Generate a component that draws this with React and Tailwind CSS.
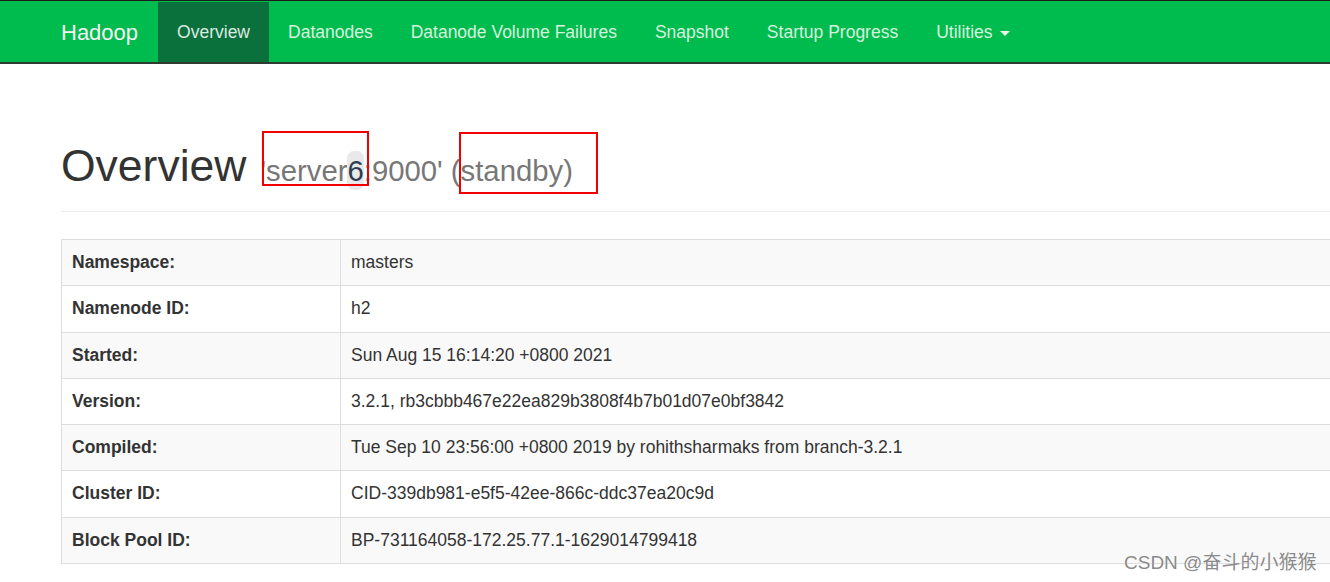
import React from "react";

const rows = [
  ["Namespace:", "masters"],
  ["Namenode ID:", "h2"],
  ["Started:", "Sun Aug 15 16:14:20 +0800 2021"],
  ["Version:", "3.2.1, rb3cbbb467e22ea829b3808f4b7b01d07e0bf3842"],
  ["Compiled:", "Tue Sep 10 23:56:00 +0800 2019 by rohithsharmaks from branch-3.2.1"],
  ["Cluster ID:", "CID-339db981-e5f5-42ee-866c-ddc37ea20c9d"],
  ["Block Pool ID:", "BP-731164058-172.25.77.1-1629014799418"],
];

const navItems = ["Datanodes", "Datanode Volume Failures", "Snapshot", "Startup Progress"];

export default function App() {
  return (
    <div
      className="relative w-[1330px] h-[582px] overflow-hidden bg-white text-[#333]"
      style={{ fontFamily: '"Liberation Sans", Arial, sans-serif' }}
    >
      {/* Navbar */}
      <div className="border-t border-[#1b1b1b] border-b-2 border-b-[#2f3a33] bg-[#00bc4e]">
        <div className="flex h-[61px] items-stretch pl-[61px] pt-[1px] text-[17.5px]">
          <div className="flex items-center pr-[20px] text-[22px] text-[#f2f2f2]">Hadoop</div>
          <div className="flex items-center bg-[#0a703c] px-[19px] text-[#dde9e1]">Overview</div>
          {navItems.map((n) => (
            <div key={n} className="flex items-center px-[19px] text-[#d7f3de]">
              {n}
            </div>
          ))}
          <div className="flex items-center px-[19px] text-[#d7f3de]">
            Utilities
            <span className="ml-[7px] mt-[2px] h-0 w-0 border-x-[5px] border-t-[5px] border-x-transparent border-t-[#e6f7ea]" />
          </div>
        </div>
      </div>

      {/* Page header */}
      <div className="pl-[61px]">
        <div className="mt-[77px] border-b border-[#eeeeee] pb-[16px]">
          <h1 className="text-[44.5px] leading-[49px] text-[#333]">
            Overview<span className="inline-block w-[14px]" />
            <span className="text-[29.3px] text-[#777]">
              'server<span className="rounded-[7px] bg-[#e9e9e9] py-[3px] text-[#2c3e50]">6</span>:9000' (standby)
            </span>
          </h1>
        </div>

        {/* Table */}
        <table className="mt-[27px] w-[1300px] border-collapse border border-[#dddddd] text-[17.5px] leading-[25.3px]">
          <tbody>
            {rows.map(([k, v], i) => (
              <tr key={k} className={i % 2 === 0 ? "bg-[#f9f9f9]" : "bg-white"}>
                <th className="w-[279px] border border-[#dddddd] px-[10px] py-[10px] text-left font-bold text-[#333]">
                  {k}
                </th>
                <td className="border border-[#dddddd] px-[10px] py-[10px] text-[#333]">{v}</td>
              </tr>
            ))}
          </tbody>
        </table>
      </div>

      {/* annotation boxes */}
      <div className="absolute left-[262px] top-[131px] h-[55px] w-[107px] border-2 border-[#f20000]" />
      <div className="absolute left-[459px] top-[132px] h-[62px] w-[139px] border-2 border-[#f20000]" />

      {/* watermark */}
      <div
        className="absolute left-[1124px] top-[551px] text-[19px] leading-[24px] text-[#8a8a8a]"
        style={{
          fontFamily: '"Liberation Sans", "Noto Sans CJK SC", sans-serif',
          textShadow: "0 0 1px #fff, 0 0 1px #fff",
        }}
      >
        CSDN @奋斗的小猴猴
      </div>
    </div>
  );
}
